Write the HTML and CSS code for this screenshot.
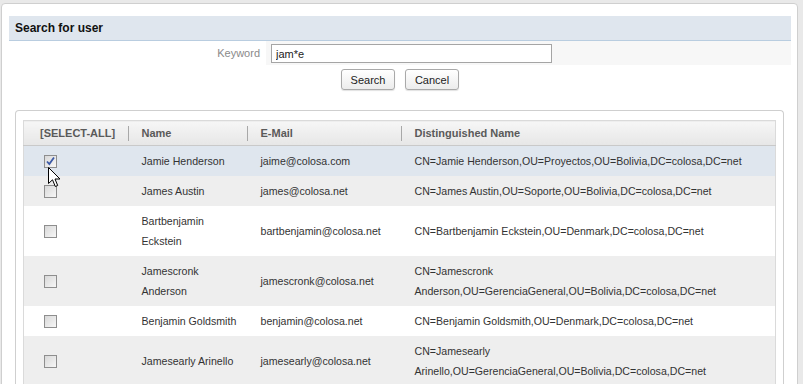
FILE: index.html
```html
<!DOCTYPE html>
<html lang="en">
<head>
  <meta charset="UTF-8" />
  <title>Search for user</title>
  <link rel="stylesheet" href="styles.css">
</head>
<body>
  <div class="panel">
    <div class="panel-title">Search for user</div>

    <div class="form-row">
      <label class="form-label" for="keyword">Keyword</label>
      <div class="form-field">
        <input type="text" id="keyword" class="text-input" value="jam*e" />
      </div>
    </div>

    <div class="form-buttons">
      <button class="btn">Search</button>
      <button class="btn">Cancel</button>
    </div>

    <div class="results">
      <table class="grid">
        <colgroup>
          <col class="col-check">
          <col class="col-name">
          <col class="col-mail">
          <col class="col-dn">
        </colgroup>
        <thead>
          <tr>
            <th class="th-check"><span class="th-text">[SELECT-ALL]</span></th>
            <th><span class="th-text">Name</span></th>
            <th><span class="th-text">E-Mail</span></th>
            <th class="th-last"><span class="th-text">Distinguished Name</span></th>
          </tr>
        </thead>
        <tbody>
          <tr class="row-selected">
            <td class="td-check">
              <span class="check checked">
                <svg width="11" height="11" viewBox="0 0 11 11"><path d="M2 5.5 L4.3 8 L9 1.5" fill="none" stroke="#3c5aa6" stroke-width="1.8"/></svg>
              </span>
              <svg class="cursor" width="14" height="22" viewBox="0 0 14 22"><path d="M0.5 0.5 L0.5 16.5 L4.5 12.8 L7.3 19.5 L9.7 18.5 L7 12 L12 12 Z" fill="#fff" stroke="#000" stroke-width="1" stroke-linejoin="miter"/></svg>
            </td>
            <td>Jamie Henderson</td>
            <td>jaime@colosa.com</td>
            <td>CN=Jamie Henderson,OU=Proyectos,OU=Bolivia,DC=colosa,DC=net</td>
          </tr>
          <tr class="row-alt">
            <td class="td-check"><span class="check"></span></td>
            <td>James Austin</td>
            <td>james@colosa.net</td>
            <td>CN=James Austin,OU=Soporte,OU=Bolivia,DC=colosa,DC=net</td>
          </tr>
          <tr>
            <td class="td-check"><span class="check"></span></td>
            <td>Bartbenjamin Eckstein</td>
            <td>bartbenjamin@colosa.net</td>
            <td>CN=Bartbenjamin Eckstein,OU=Denmark,DC=colosa,DC=net</td>
          </tr>
          <tr class="row-alt">
            <td class="td-check"><span class="check"></span></td>
            <td>Jamescronk Anderson</td>
            <td>jamescronk@colosa.net</td>
            <td>CN=Jamescronk Anderson,OU=GerenciaGeneral,OU=Bolivia,DC=colosa,DC=net</td>
          </tr>
          <tr>
            <td class="td-check"><span class="check"></span></td>
            <td>Benjamin Goldsmith</td>
            <td>benjamin@colosa.net</td>
            <td>CN=Benjamin Goldsmith,OU=Denmark,DC=colosa,DC=net</td>
          </tr>
          <tr class="row-alt">
            <td class="td-check"><span class="check"></span></td>
            <td>Jamesearly Arinello</td>
            <td>jamesearly@colosa.net</td>
            <td>CN=Jamesearly Arinello,OU=GerenciaGeneral,OU=Bolivia,DC=colosa,DC=net</td>
          </tr>
        </tbody>
      </table>
    </div>
  </div>
</body>
</html>
```

FILE: styles.css
```css
html, body {
  margin: 0;
  height: 100%;
  overflow: hidden;
}
body {
  font-family: "Liberation Sans", Arial, sans-serif;
  font-size: 11px;
  color: #333;
  background-color: #e9e9e9;
  padding: 3px 0 0 1px;
  box-sizing: border-box;
}
.panel {
  width: 797px;
  min-height: 400px;
  box-sizing: border-box;
  background: #fff;
  border: 1px solid #cfcfcf;
  border-radius: 4px 4px 0 0;
  padding: 12px 6px 0 7px;
}
.panel-title {
  height: 24px;
  line-height: 24px;
  background-color: #dfe6ee;
  border-bottom: 1px solid #b9cde0;
  padding-left: 6px;
  font-size: 12px;
  font-weight: bold;
  color: #111;
}
.form-row {
  display: flex;
  height: 24px;
}
.form-label {
  width: 257px;
  box-sizing: border-box;
  padding-right: 6px;
  text-align: right;
  line-height: 24px;
  color: #8a8a8a;
  font-size: 11px;
  background: #fff;
}
.form-field {
  flex: 1;
  background-color: #f7f7f7;
  padding: 3px 0 0 5px;
}
.text-input {
  width: 281px;
  height: 19px;
  box-sizing: border-box;
  border: 1px solid #a5a5a5;
  padding: 0 4px;
  font-family: "Liberation Sans", Arial, sans-serif;
  font-size: 11px;
  color: #222;
  outline: none;
}
.form-buttons {
  display: flex;
  justify-content: center;
  gap: 10px;
  margin-top: 4px;
}
.btn {
  width: 54px;
  height: 21px;
  padding: 0;
  font-family: "Liberation Sans", Arial, sans-serif;
  font-size: 11px;
  color: #222;
  border: 1px solid #a9a9a9;
  border-radius: 3px;
  background: linear-gradient(#ffffff, #ececec);
  box-shadow: 0 1px 1px rgba(0, 0, 0, 0.12);
}
.results {
  margin: 20px 7px 0 6px;
  border: 1px solid #cfcfcf;
  border-bottom: none;
  border-radius: 4px 4px 0 0;
  padding: 9px 7px 0 7px;
  min-height: 300px;
}
.grid {
  width: 100%;
  border-collapse: collapse;
  table-layout: fixed;
  border: 1px solid #dadada;
}
.col-check { width: 108px; }
.col-name { width: 119px; }
.col-mail { width: 154px; }
.grid th {
  position: relative;
  height: 24px;
  padding: 0 10px;
  text-align: left;
  font-weight: bold;
  font-size: 11px;
  color: #5a5a5a;
  background: linear-gradient(#f6f6f6, #e6e6e6);
  border-bottom: 1px solid #c9c9c9;
}
.grid th::after {
  content: "";
  position: absolute;
  right: 3px;
  top: 5px;
  height: 15px;
  border-right: 1px solid #a8a8a8;
}
.grid th.th-last::after {
  display: none;
}
.grid th.th-check {
  padding-left: 16px;
}
.grid td {
  padding: 5px 10px;
  line-height: 20px;
  font-size: 10.6px;
  vertical-align: middle;
}
.grid td.td-check {
  position: relative;
  padding-left: 20px;
}
.row-alt td {
  background-color: #eeeeee;
}
.row-selected td {
  background-color: #dfe6ee;
}
.check {
  display: block;
  width: 13px;
  height: 13px;
  box-sizing: border-box;
  border: 1px solid #8e8e8e;
  background: linear-gradient(135deg, #d8d8d8, #f7f7f7);
}
.check svg {
  display: block;
}
.cursor {
  position: absolute;
  left: 24px;
  top: 21px;
  z-index: 5;
}
```
